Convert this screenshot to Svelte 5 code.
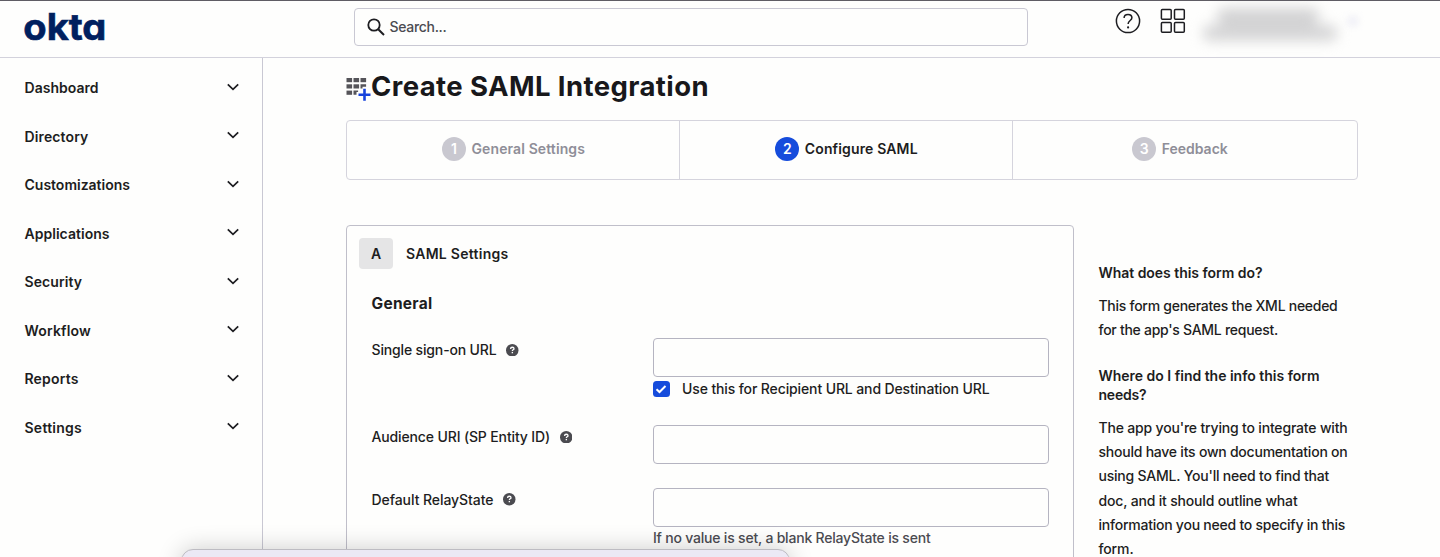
<script>
  // Adjusts tracking so that a label takes the given width in pixels.
  function track(node, width) {
    const natural = node.getBoundingClientRect().width;
    node.style.letterSpacing = `${(width - natural) / node.textContent.length}px`;
  }

  const nav = [
    ['Dashboard', 74],
    ['Directory', 64],
    ['Customizations', 105.5],
    ['Applications', 85],
    ['Security', 57.5],
    ['Workflow', 66.5],
    ['Reports', 54],
    ['Settings', 57.5]
  ];

  const steps = [
    { n: 1, label: 'General Settings', width: 113.5 },
    { n: 2, label: 'Configure SAML', width: 113, active: true },
    { n: 3, label: 'Feedback', width: 66 }
  ];

  const help = [
    {
      title: [['What does this form do?', 164]],
      body: [
        ['This form generates the XML needed', 239],
        ["for the app's SAML request.", 179.5]
      ]
    },
    {
      title: [
        ['Where do I find the info this form', 221],
        ['needs?', 48]
      ],
      body: [
        ["The app you're trying to integrate with", 249],
        ['should have its own documentation on', 249],
        ["using SAML. You'll need to find that", 230.5],
        ['doc, and it should outline what', 199],
        ['information you need to specify in this', 246.5],
        ['form.', 35]
      ]
    }
  ];
</script>

{#snippet text(value, width)}<span class="text" use:track={width}>{value}</span>{/snippet}

{#snippet hint()}
  <svg class="hint" viewBox="0 0 12 12" aria-hidden="true">
    <circle cx="6" cy="6" r="6" fill="#4b4b50" />
    <path d="M4.4 4.7c0-1 .7-1.6 1.6-1.6s1.7.5 1.7 1.4c0 1.1-1.6 1.1-1.6 2.2" fill="none" stroke="#fff" stroke-width="1.25" />
    <rect x="5.45" y="7.6" width="1.3" height="1.3" fill="#fff" />
  </svg>
{/snippet}

<div class="page">
  <header>
    <svg class="logo" width="90" height="48" viewBox="0 0 90 48" role="img" aria-label="okta">
      <text x="-.7" y="36.4" textLength="83" lengthAdjust="spacingAndGlyphs">okta</text>
    </svg>
    <div class="search">
      <svg width="18" height="18" viewBox="0 0 18 18" fill="none" stroke="#1d1d21" stroke-width="1.8">
        <circle cx="7" cy="7" r="5.7" /><path d="M11.2 11.2L17 17" stroke-width="2" />
      </svg>
      {@render text('Search...', 57)}
    </div>
    <div class="tools">
      <svg width="26" height="26" viewBox="0 0 26 26" fill="none" stroke="#1d1d21" stroke-width="1.5">
        <circle cx="13" cy="13" r="11.6" />
        <path d="M9.1 10.1c0-2.2 1.6-3.6 3.9-3.6s3.9 1.3 3.9 3.3c0 2.8-3.8 2.7-3.8 6.2" />
        <circle cx="13.1" cy="19.4" r="1.1" fill="#1d1d21" stroke="none" />
      </svg>
      <svg width="26" height="26" viewBox="0 0 26 26" fill="none" stroke="#1d1d21" stroke-width="1.5">
        <rect x="1.4" y="1.4" width="9.8" height="9.8" rx="1" /><rect x="14.5" y="1.4" width="9.8" height="9.8" rx="1" />
        <rect x="1.4" y="14.5" width="9.8" height="9.8" rx="1" /><rect x="14.5" y="14.5" width="9.8" height="9.8" rx="1" />
      </svg>
      <div class="account"><i></i><b></b></div>
      <span class="caret"></span>
    </div>
  </header>

  <div class="columns">
    <nav>
      {#each nav as [label, width]}
        <div class="item">
          {@render text(label, width)}
          <svg width="12" height="8" viewBox="0 0 12 8" fill="none" stroke="#1d1d21" stroke-width="1.7"><path d="M.8 1.3L6 6.4l5.2-5.1" /></svg>
        </div>
      {/each}
    </nav>

    <main>
      <h1>
        <svg width="25" height="25" viewBox="0 0 25 25" aria-hidden="true">
          <g fill="#555459">
            <rect x=".5" y="2" width="5.6" height="4.2" /><rect x="7.5" y="2" width="5.6" height="4.2" /><rect x="14.5" y="2" width="5.6" height="4.2" />
            <rect x=".5" y="8.3" width="5.6" height="4.2" /><rect x="7.5" y="8.3" width="5.6" height="4.2" /><path d="M14.5 8.3h5.6v2.4h-3.6v1.8h-2z" />
            <rect x=".5" y="14.6" width="5.6" height="4.2" /><path d="M7.5 14.6h4.6v1.5h-1.6v2.7h-3z" />
          </g>
          <path d="M18.5 12.8v12M12.5 18.7h12" stroke="#1743dc" stroke-width="2.6" />
        </svg>
        {@render text('Create SAML Integration', 338)}
      </h1>

      <div class="steps">
        {#each steps as step}
          <div class="step" class:active={step.active}>
            <span class="num">{step.n}</span>
            {@render text(step.label, step.width)}
          </div>
        {/each}
      </div>

      <div class="content">
        <section class="panel">
          <div class="head"><span class="badge">A</span>{@render text('SAML Settings', 102.5)}</div>
          <h2>{@render text('General', 61)}</h2>
          <div class="row first">
            <div class="label">{@render text('Single sign-on URL', 125)}{@render hint()}</div>
            <div class="field">
              <div class="input"></div>
              <div class="check">
                <span class="box"><svg width="16" height="16" viewBox="0 0 16 16" fill="none" stroke="#fff" stroke-width="2"><path d="M3.5 8.2l3 2.8 6-6" /></svg></span>
                {@render text('Use this for Recipient URL and Destination URL', 307.5)}
              </div>
            </div>
          </div>
          <div class="row second">
            <div class="label">{@render text('Audience URI (SP Entity ID)', 178.5)}{@render hint()}</div>
            <div class="field"><div class="input"></div></div>
          </div>
          <div class="row">
            <div class="label">{@render text('Default RelayState', 122)}{@render hint()}</div>
            <div class="field">
              <div class="input"></div>
              <div class="note">{@render text('If no value is set, a blank RelayState is sent', 277.5)}</div>
            </div>
          </div>
        </section>

        <aside>
          {#each help as block}
            <h3>{#each block.title as [line, width]}<div>{@render text(line, width)}</div>{/each}</h3>
            <div class="para">{#each block.body as [line, width]}<div>{@render text(line, width)}</div>{/each}</div>
          {/each}
        </aside>
      </div>
    </main>
  </div>

  <div class="sheet"></div>
</div>

<style>
  :global(body) { background: #fefefd; }
  .page {
    position: relative; width: 1440px; height: 557px; overflow: hidden; box-sizing: border-box;
    display: flex; flex-direction: column;
    border-top: 1px solid #5f5d64; background: #fefefd; color: #1d1d21;
    font: 500 14px/20px Inter, "Liberation Sans", sans-serif;
  }
  .page :global(*) { box-sizing: border-box; }
  .text { display: inline-block; white-space: nowrap; }
  svg { display: block; flex: none; }

  header { display: flex; height: 57px; flex: none; border-bottom: 1px solid #d3d2dc; align-items: flex-start; }
  .logo { margin: 3px 0 0 24px; overflow: visible; }
  .logo text { font: 700 37px Inter, sans-serif; font-feature-settings: "cv11"; fill: #00205f; stroke: #00205f; stroke-width: .6; }
  .search {
    display: flex; align-items: center; gap: 4.5px; width: 674px; height: 38px; margin: 7px 0 0 240px; padding: 0 0 1px 12px;
    border: 1px solid #c9c8d3; border-radius: 4px; color: #4b4b51; font-weight: 500;
  }
  .tools { display: flex; margin: 7px 0 0 87px; }
  .tools svg + svg { margin-left: 19px; }
  .account { display: flex; flex-direction: column; align-items: center; width: 134px; margin: 0 0 0 17px; filter: blur(6.5px); }
  .account i { width: 102px; height: 17px; margin-left: -4px; border-radius: 8px; background: #d3d3d4; }
  .account b { width: 134px; height: 16px; border-radius: 7px; background: #d5d5d6; }
  .caret { width: 12px; height: 12px; margin: 7px 0 0 10px; border-radius: 6px; background: #f1f1f7; filter: blur(3px); }

  .columns { display: flex; flex: 1; min-height: 0; }
  nav { width: 263px; flex: none; padding: 6px 23.5px 0 24.5px; border-right: 1px solid #c9c8d3; font-weight: 600; }
  .item { display: flex; height: 48.5px; align-items: center; justify-content: space-between; }
  .item svg { margin-top: -3px; }

  main { margin-left: 83px; width: 1012px; }
  h1 { display: flex; align-items: center; height: 62px; margin: 0; padding-bottom: 7px; font-size: 27.5px; line-height: 34px; font-weight: 700; color: #18181b; }
  h1 svg { margin-top: 5px; }
  .steps { display: grid; grid-template-columns: 333px 333px 1fr; height: 60px; border: 1px solid #d5d4dd; border-radius: 4px; font-weight: 600; color: #8f8e98; }
  .step { display: flex; align-items: center; justify-content: center; gap: 5.5px; padding: 0 0 2px 1px; }
  .step:last-child { padding-right: 11px; }
  .step:not(:last-child) { border-right: 1px solid #d5d4dd; }
  .num { width: 24px; height: 24px; border-radius: 50%; background: #c9c8d0; color: #fff; text-align: center; line-height: 24px; }
  .active { color: #1d1d21; }
  .active .num { background: #164cdc; }

  .content { display: flex; align-items: flex-start; padding-top: 45px; }
  .panel { width: 728px; height: 400px; flex: none; border: 1px solid #c0bfca; border-radius: 4px; padding: 12px 0 0 12px; }
  .head { display: flex; align-items: center; gap: 13px; font-weight: 600; }
  .badge { width: 34px; height: 31px; border-radius: 4px; background: #e5e5e6; text-align: center; line-height: 31px; }
  h2 { margin: 25px 0 0 12.5px; font-size: 15.5px; line-height: 20px; font-weight: 700; }
  .row { display: flex; margin-left: 12.5px; font-weight: 450; }
  .first { margin-top: 24px; height: 87px; }
  .second { height: 62.5px; }
  .label { display: flex; align-items: center; gap: 9.5px; width: 281.5px; height: 24px; }
  .hint { width: 12.5px; height: 12.5px; }
  .input { width: 396px; height: 39px; border: 1px solid #b5b4c1; border-radius: 4px; background: #fefefd; }
  .check { display: flex; align-items: center; gap: 12px; margin-top: 2px; }
  .box { width: 17px; height: 16px; border-radius: 3.5px; background: #164cdc; }
  .note { margin-top: 1px; color: #4b4b51; }

  aside { margin: 37.5px 0 0 24.5px; }
  h3 { margin: 0 0 12px; font-size: 14px; line-height: 19px; font-weight: 600; }
  .para { margin-bottom: 24px; line-height: 24.2px; font-weight: 450; }

  .sheet {
    position: absolute; left: 181px; top: 548px; width: 609px; height: 40px; border: 1px solid #bdbcc2; border-radius: 12px;
    background: #ebe9f5; box-shadow: 0 0 24px rgba(0, 0, 0, .2);
  }
</style>
